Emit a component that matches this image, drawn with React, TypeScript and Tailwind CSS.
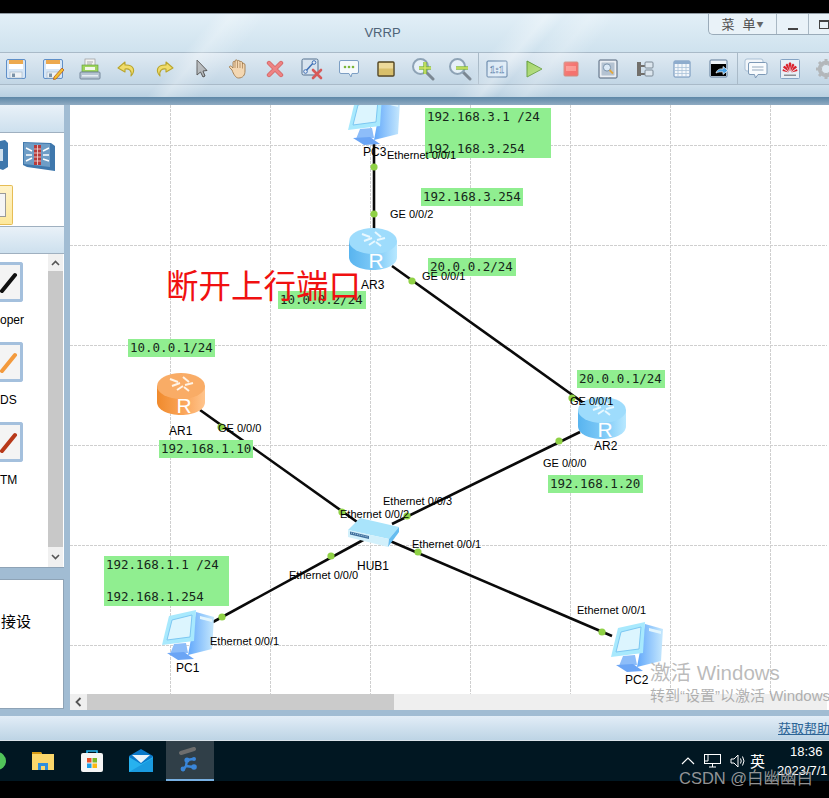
import type { ReactNode } from "react";

const CANVAS_X = 70;
const CANVAS_Y = 105;

const gridX = [170, 270, 370, 470, 570, 670, 770];
const gridY = [145, 245, 345, 445, 545, 645];

const links = [
  [374, 142, 374, 235],
  [392, 266, 585, 404],
  [200, 410, 360, 524],
  [580, 432, 392, 524],
  [365, 539, 213, 622],
  [390, 541, 612, 636],
];

const dots = [
  [374, 167], [374, 214], [412, 281], [572, 398], [221, 427], [342, 512],
  [559, 441], [407, 516], [331, 556], [222, 617], [418, 552], [602, 632],
];

const ports = [
  { text: "Ethernet 0/0/1", x: 387, y: 155 },
  { text: "GE 0/0/2", x: 390, y: 214 },
  { text: "GE 0/0/1", x: 422, y: 276 },
  { text: "GE 0/0/0", x: 218, y: 428 },
  { text: "GE 0/0/1", x: 570, y: 401 },
  { text: "GE 0/0/0", x: 543, y: 463 },
  { text: "Ethernet 0/0/3", x: 383, y: 501 },
  { text: "Ethernet 0/0/2", x: 340, y: 514 },
  { text: "Ethernet 0/0/1", x: 412, y: 544 },
  { text: "Ethernet 0/0/0", x: 289, y: 575 },
  { text: "Ethernet 0/0/1", x: 210, y: 641 },
  { text: "Ethernet 0/0/1", x: 577, y: 610 },
];

const names = [
  { text: "PC3", x: 363, y: 152 },
  { text: "AR3", x: 361, y: 285 },
  { text: "AR1", x: 169, y: 431 },
  { text: "AR2", x: 594, y: 446 },
  { text: "HUB1", x: 357, y: 566 },
  { text: "PC1", x: 176, y: 668 },
  { text: "PC2", x: 625, y: 680 },
];

const notes = [
  { lines: ["192.168.3.1 /24", "", "192.168.3.254"], x: 425, y: 108, w: 126 },
  { lines: ["192.168.3.254"], x: 421, y: 188, w: 102 },
  { lines: ["20.0.0.2/24"], x: 428, y: 258, w: 88 },
  { lines: ["10.0.0.2/24"], x: 278, y: 291, w: 88 },
  { lines: ["10.0.0.1/24"], x: 128, y: 339, w: 87 },
  { lines: ["192.168.1.10"], x: 159, y: 440, w: 94 },
  { lines: ["20.0.0.1/24"], x: 577, y: 370, w: 88 },
  { lines: ["192.168.1.20"], x: 548, y: 475, w: 95 },
  { lines: ["192.168.1.1 /24", "", "192.168.1.254"], x: 104, y: 556, w: 125 },
];

const Save = ({ pencil }: { pencil?: boolean }) => (
  <svg width="22" height="22" viewBox="0 0 22 22">
    <rect x="1.5" y="1.5" width="19" height="19" rx="1.5" fill="#d6e6f6" stroke="#5f8fc8" />
    <rect x="4" y="2" width="14" height="4" fill="#eda94e" />
    <rect x="4" y="6" width="14" height="5" fill="#fff" />
    <rect x="5" y="14" width="12" height="6" fill="#eef2f6" stroke="#9fb2c4" strokeWidth="0.6" />
    <rect x="7" y="15.5" width="3" height="3.5" fill="#7c93a8" />
    {pencil && <path d="M12 19 L20 10 L22 12 L14 21 L11.5 21.5 Z" fill="#f2c230" stroke="#b8561c" strokeWidth="0.8" />}
  </svg>
);

const Printer = () => (
  <svg width="22" height="22" viewBox="0 0 22 22">
    <rect x="6" y="1" width="10" height="9" fill="#f3f3f3" stroke="#9a9a9a" strokeWidth="0.7" />
    <path d="M8 4h6M8 6h5" stroke="#8a8a8a" strokeWidth="0.7" />
    <rect x="3" y="7" width="16" height="7" fill="#9ed45f" stroke="#5d9a2e" strokeWidth="0.6" />
    <rect x="6" y="9" width="10" height="3" fill="#f3f8ea" />
    <rect x="1" y="14" width="20" height="7" rx="1" fill="#b6c4d2" stroke="#75879a" />
    <rect x="3" y="17" width="16" height="1.5" fill="#e6edf3" />
  </svg>
);

const Turn = ({ flip }: { flip?: boolean }) => (
  <svg width="20" height="20" viewBox="0 0 20 20" className={flip ? "-scale-x-100" : ""}>
    <path d="M8 3 L1 9 L8 13 V10 C12 9.5 15 11 14 17 C18.5 12 17.5 5.5 8 6 Z" fill="#f0dc6a" stroke="#b9a52c" strokeWidth="1.1" strokeLinejoin="round" />
  </svg>
);

const Cursor = () => (
  <svg width="20" height="20" viewBox="0 0 20 20">
    <path d="M6 1 V16 L9.5 13 L12 18 L14 17 L12 12 L16 11.5 Z" fill="#a9adb0" stroke="#3d3d3d" strokeWidth="1" strokeLinejoin="round" />
  </svg>
);

const Hand = () => (
  <svg width="20" height="20" viewBox="0 0 20 20">
    <path d="M4 11 L1.5 8.5 C1 7 2.5 6.5 3.5 7.5 L5 9 V3.5 C5 2 7 2 7 3.5 V2 C7 .5 9.5 .5 9.5 2 V2.5 C9.5 1 12 1 12 3 C12 2 14.5 2.2 14.5 4 V5 C14.5 4 17 4 17 6 V12 C17 16 15 19 10.5 19 C7.5 19 5.5 15 4 11 Z" fill="#f3d7b2" stroke="#a07a4d" strokeWidth="0.9" />
    <path d="M7 4 V9 M9.5 3 V9 M12 3.5 V9 M14.5 5 V9.5" stroke="#a07a4d" strokeWidth="0.7" />
  </svg>
);

const Cross = () => (
  <svg width="18" height="18" viewBox="0 0 18 18">
    <path d="M3 3 L15 15 M15 3 L3 15" stroke="#d46a6b" strokeWidth="4.4" strokeLinecap="round" />
    <path d="M3 3 L15 15 M15 3 L3 15" stroke="#ee8384" strokeWidth="2.6" strokeLinecap="round" />
  </svg>
);

const DeleteLink = () => (
  <svg width="22" height="22" viewBox="0 0 22 22">
    <rect x="1" y="1" width="16" height="16" rx="1.5" fill="#d8e4ef" stroke="#55718f" />
    <path d="M4 14 L13 4" stroke="#3f70b6" strokeWidth="1.5" />
    <circle cx="4.5" cy="13.5" r="1.8" fill="#e7eef5" stroke="#3f70b6" />
    <circle cx="13" cy="4.5" r="1.8" fill="#e7eef5" stroke="#3f70b6" />
    <path d="M12 12 L20 20 M20 12 L12 20" stroke="#d65a5a" strokeWidth="2.6" strokeLinecap="round" />
  </svg>
);

const Comment = () => (
  <svg width="20" height="20" viewBox="0 0 20 20">
    <path d="M2 1.5 H18 Q19.5 1.5 19.5 3 V13 Q19.5 14.5 18 14.5 H13 L12 18 L10 14.5 H2 Q.5 14.5 .5 13 V3 Q.5 1.5 2 1.5 Z" fill="#f5f9fc" stroke="#7d9fc4" />
    <circle cx="6" cy="8" r="1.3" fill="#7cb63a" />
    <circle cx="10" cy="8" r="1.3" fill="#7cb63a" />
    <circle cx="14" cy="8" r="1.3" fill="#7cb63a" />
  </svg>
);

const Frame = () => (
  <svg width="18" height="16" viewBox="0 0 18 16">
    <rect x="1" y="1" width="16" height="14" rx="1" fill="#ecd99a" stroke="#51431f" strokeWidth="1.4" />
    <rect x="2" y="7.5" width="14" height="6.5" fill="#d8bf6b" />
  </svg>
);

const Zoom = ({ plus }: { plus?: boolean }) => (
  <svg width="24" height="24" viewBox="0 0 24 24">
    <path d="M15 15 L22 22" stroke="#7b8792" strokeWidth="3" strokeLinecap="round" />
    <circle cx="9.5" cy="9.5" r="7.5" fill="#e6f0f8" stroke="#8ea3b6" strokeWidth="2" />
    <path d="M8 11 H20" stroke="#7fb83a" strokeWidth="3.4" />
    {plus && <path d="M14 5 V17" stroke="#7fb83a" strokeWidth="3.4" />}
    <path d="M8 11 H20" stroke="#d7e86a" strokeWidth="1.4" />
    {plus && <path d="M14 5 V17" stroke="#d7e86a" strokeWidth="1.4" />}
  </svg>
);

const OneToOne = () => (
  <svg width="22" height="18" viewBox="0 0 22 18">
    <rect x="1" y="1" width="20" height="16" rx="1" fill="#d6e6f4" stroke="#466d96" />
    <text x="11" y="13" textAnchor="middle" fontSize="11" fontWeight="700" fontFamily="Liberation Serif" fill="#f5f9fc" stroke="#2f6398" strokeWidth="0.6">1:1</text>
  </svg>
);

const Play = () => (
  <svg width="18" height="18" viewBox="0 0 18 18">
    <path d="M2 1 L17 9 L2 17 Z" fill="#a5d66a" stroke="#5f9a36" strokeLinejoin="round" />
  </svg>
);

const Stop = () => (
  <svg width="16" height="16" viewBox="0 0 16 16">
    <rect x="1" y="1" width="14" height="14" rx="1" fill="#f4736f" stroke="#cf8d80" />
    <rect x="3" y="5" width="10" height="5" fill="#fb9a94" />
  </svg>
);

const Capture = () => (
  <svg width="20" height="20" viewBox="0 0 20 20">
    <rect x="1" y="1" width="18" height="18" rx="1" fill="#e1e7ee" stroke="#53647a" />
    <rect x="3" y="3" width="14" height="14" fill="#b5c3d2" stroke="#fff" strokeWidth="0.7" />
    <circle cx="9" cy="8.5" r="3.6" fill="#dbe9f6" stroke="#7d95ad" />
    <path d="M11.5 11 L15 14.5" stroke="#e3a93d" strokeWidth="1.8" />
  </svg>
);

const Tree = () => (
  <svg width="18" height="18" viewBox="0 0 18 18">
    <rect x="1" y="2" width="4" height="14" fill="#72706c" />
    <path d="M4 6 H9 M4 14 H9" stroke="#72706c" strokeWidth="2" />
    <rect x="9" y="2" width="8" height="6" rx="1" fill="#dce6ee" stroke="#7d8a96" />
    <rect x="9" y="10" width="8" height="6" rx="1" fill="#dce6ee" stroke="#7d8a96" />
  </svg>
);

const Table = () => (
  <svg width="18" height="18" viewBox="0 0 18 18">
    <rect x="1" y="1" width="16" height="16" rx="1" fill="#f3f7fb" stroke="#6d8fb8" />
    <rect x="1" y="1" width="16" height="3" fill="#8eaccd" />
    <path d="M1 7.5 H17 M1 10.5 H17 M1 13.5 H17 M5 4 V17 M9 4 V17 M13 4 V17" stroke="#a9c1d9" strokeWidth="0.8" />
  </svg>
);

const Terminal = () => (
  <svg width="20" height="20" viewBox="0 0 20 20">
    <rect x="1" y="1" width="17" height="17" rx="1" fill="#eef3f8" stroke="#5f7b99" />
    <rect x="2" y="5" width="15" height="12" fill="#000" />
    <path d="M7 14 C8 10.5 11 9.5 14 10 V7.5 L19 11.5 L14 15.5 V13 C11.5 12.5 9 13 7 14 Z" fill="#4aa2e5" stroke="#fff" strokeWidth="0.7" />
  </svg>
);

const Chat = () => (
  <svg width="24" height="22" viewBox="0 0 24 22">
    <rect x="1" y="1" width="18" height="12" rx="2" fill="#f2f6fa" stroke="#a9bfd4" />
    <path d="M6 4.5 H21.5 Q23 4.5 23 6 V15 Q23 16.5 21.5 16.5 H14 L11.5 20 L10.5 16.5 H6 Q4.5 16.5 4.5 15 V6 Q4.5 4.5 6 4.5 Z" fill="#f8fbfd" stroke="#7d99b6" />
    <path d="M8 9 H19.5 M8 12 H19.5" stroke="#94a9be" />
  </svg>
);

const Huawei = () => (
  <svg width="20" height="20" viewBox="0 0 20 20" className="-translate-x-[3px]">
    <rect x=".5" y=".5" width="19" height="19" rx="1" fill="#e8eff6" stroke="#86a4c4" />
    <g fill="#d9212c">
      <path d="M10 12 L8.6 4.5 L10 3 L11.4 4.5 Z" />
      <path d="M9.5 12.5 L5.5 6 L7 4.5 L8.5 6 Z" />
      <path d="M10.5 12.5 L14.5 6 L13 4.5 L11.5 6 Z" />
      <path d="M9 13 L3 8.5 L4.2 6.8 L6.5 8 Z" />
      <path d="M11 13 L17 8.5 L15.8 6.8 L13.5 8 Z" />
      <path d="M8.8 13.5 L2.5 12 L3 10 Z" />
      <path d="M11.2 13.5 L17.5 12 L17 10 Z" />
    </g>
    <rect x="4" y="15.5" width="12" height="1.5" fill="#8b8f94" />
  </svg>
);

const Gear = () => (
  <svg width="22" height="22" viewBox="0 0 22 22" className="-translate-x-[4px]">
    <circle cx="11" cy="11" r="6.5" fill="none" stroke="#b3b7ba" strokeWidth="3.4" />
    <path d="M11 1 V21 M1 11 H21 M4 4 L18 18 M18 4 L4 18" stroke="#b3b7ba" strokeWidth="3" />
    <circle cx="11" cy="11" r="4" fill="#dce8f0" />
  </svg>
);

const tools: ReactNode[] = [
  <Save />, <Save pencil />, <Printer />, <Turn />, <Turn flip />, <Cursor />, <Hand />, <Cross />,
  <DeleteLink />, <Comment />, <Frame />, <Zoom plus />, <Zoom />, <OneToOne />, <Play />, <Stop />,
  <Capture />, <Tree />, <Table />, <Terminal />, <Chat />, <Huawei />, <Gear />,
];

const Router = ({ x, y, orange }: { x: number; y: number; orange?: boolean }) => {
  const id = orange ? "router-orange" : "router-blue";
  return (
    <svg
      className="absolute overflow-visible"
      style={{ left: x - CANVAS_X, top: y - CANVAS_Y }}
      width="48"
      height="42"
      viewBox="0 0 48 42"
    >
      <defs>
        <linearGradient id={id} x1="0" x2="1" y1="0" y2="0">
          <stop offset="0" stopColor={orange ? "#f08a2c" : "#58b4ef"} />
          <stop offset="0.6" stopColor={orange ? "#fba85e" : "#84cdf8"} />
          <stop offset="1" stopColor={orange ? "#ffc48c" : "#b8e8ff"} />
        </linearGradient>
      </defs>
      <path d="M0 13 V29 C0 37 11 42 24 42 C37 42 48 37 48 29 V13 Z" fill={`url(#${id})`} />
      <ellipse cx="24" cy="13" rx="24" ry="13" fill={orange ? "#f9ac66" : "#9edcfc"} />
      <g stroke={orange ? "#fff3e6" : "#e8f8ff"} strokeWidth="2" fill="none">
        <path d="M13 6 L21 9 M15 13 L23 10 M26 4 L32 9 M28 12 L36 10 M20 17 L26 13 M32 18 L27 14" />
      </g>
      <text x="27" y="40" textAnchor="middle" fontSize="21" fontFamily="Liberation Sans" fill="#fff">
        R
      </text>
    </svg>
  );
};

const Pc = ({ x, y }: { x: number; y: number }) => (
  <svg
    className="absolute"
    style={{ left: x - CANVAS_X, top: y - CANVAS_Y }}
    width="52"
    height="52"
    viewBox="0 0 52 52"
  >
    <defs>
      <linearGradient id="pc-tower" x1="0" x2="1" y1="0" y2="0">
        <stop offset="0" stopColor="#62a8fb" />
        <stop offset="1" stopColor="#c6e8fd" />
      </linearGradient>
    </defs>
    <path d="M34 3 L52 8 L50 40 L26 46 Z" fill="url(#pc-tower)" />
    <path d="M38 7 L50 10 L50 13 L38 10 Z" fill="#e2f5fd" />
    <path d="M7 7 L34 1 L32 32 L0 36 Z" fill="#a8e9fd" />
    <path d="M10 11 L30 6 L28 28 L5 31 Z" fill="#dcf5fe" stroke="#7cc7f2" />
    <path d="M12 35 L24 34 L26 44 L8 45 Z" fill="#8dbdf9" />
    <path d="M5 44 L22 43 L32 50 L16 51 Z" fill="#6ba5f5" />
  </svg>
);

const Hub = ({ x, y }: { x: number; y: number }) => (
  <svg
    className="absolute"
    style={{ left: x - CANVAS_X, top: y - CANVAS_Y }}
    width="52"
    height="30"
    viewBox="0 0 52 30"
  >
    <path d="M0 12 L12 0 L51 9 L41 21 Z" fill="#a9e4fb" />
    <path d="M0 12 L41 21 L40 29 L0 19 Z" fill="#d2f0fb" />
    <path d="M41 21 L51 9 L51 14 L40 29 Z" fill="#65bdf0" />
    <path d="M2 13.5 L21 18 L21 21 L2 16.5 Z" fill="#3f6f9c" />
    <path d="M3 15 L20 19" stroke="#cfe6f5" strokeDasharray="1 1" strokeWidth="0.8" />
  </svg>
);

const PartialTile = ({ top, color, label, textTop }: { top: string; color: string; label: string; textTop: string }) => (
  <div className={`absolute left-0 ${top}`}>
    <div className="relative h-10 w-[23px] rounded-r-[3px] border-[3px] border-l-0 border-[#a4c0dd] bg-[#f4f4f4]">
      <svg width="20" height="34" viewBox="0 0 20 34">
        <path d="M2 26 L15 10" stroke={color} strokeWidth="4" strokeLinecap="round" />
      </svg>
    </div>
    <span className={`absolute left-0 ${textTop} text-xs`}>{label}</span>
  </div>
);

const App = () => {
  return (
    <div className="relative flex h-[798px] w-[829px] flex-col overflow-hidden bg-black font-['Liberation_Sans',sans-serif] text-black">
      <div className="h-[13px] bg-black" />

      <div className="relative flex h-[39px] items-center justify-center border-t border-[#8f9aa3] bg-[linear-gradient(180deg,#e2eff7_0%,#cfe2ee_100%)]">
        <span className="ml-[-64px] text-[13px] text-[#4e6378]">VRRP</span>
        <div className="absolute left-[708px] top-0 z-10 flex h-[21px] w-[121px] rounded-bl-[5px] border-b border-l border-[#9aabb9] bg-[#e9f2f8]">
          <span className="flex w-[68px] items-center justify-center border-r border-[#a9b8c4] font-['Noto_Sans_CJK_SC',sans-serif] text-[13px] text-[#4d4d4d]">
            菜<span className="ml-2">单</span>
            <span className="ml-px text-[7px] text-[#666]">▼</span>
          </span>
          <span className="flex w-[32px] items-end justify-center border-r border-[#a9b8c4] pb-[4px]">
            <span className="h-[2px] w-[10px] bg-[#444]" />
          </span>
          <span className="flex items-center pl-[10px]">
            <span className="h-[9px] w-[10px] border border-t-2 border-[#444]" />
          </span>
        </div>
      </div>

      <div className="flex h-[33px] items-center border-y border-[#a9bac8] bg-[linear-gradient(180deg,#dfeaf3_0%,#c2d6e5_100%)]">
        <div className="ml-[-3px] flex">
          {tools.map((tool, i) => (
            <div
              key={i}
              className={`flex h-[31px] w-[37px] shrink-0 items-center justify-center ${i === 13 || i === 20 ? "border-l border-[#a9bac8]" : ""}`}
            >
              {tool}
            </div>
          ))}
        </div>
      </div>

      <div className="h-[12px] bg-[linear-gradient(180deg,#cfe0ec_0%,#b9d0e1_100%)]" />
      <div className="h-[8px] bg-[linear-gradient(180deg,#5d87a6_0%,#8fabc2_100%)]" />

      <div className="pointer-events-none absolute left-0 top-[14px] h-[83px] w-[829px] bg-[linear-gradient(130deg,transparent_24%,rgba(255,255,255,0.28)_26%,transparent_30%,transparent_58%,rgba(255,255,255,0.3)_61%,transparent_63%,rgba(255,255,255,0.22)_66%,transparent_69%)]" />

      <div className="flex h-[611px] bg-[#a1bcd3]">
        <aside className="flex w-[64px] shrink-0 flex-col">
          <div className="h-[28px] border-b border-[#9fb0c0] bg-[linear-gradient(180deg,#e9f1f8_0%,#cde0ee_100%)]" />
          <div className="relative h-[93px] bg-white">
            <svg className="absolute left-0 top-[6px]" width="9" height="32" viewBox="0 0 9 32">
              <path d="M0 2 L5 1 L8 4 V28 L3 31 L0 30 Z" fill="#3f78ad" />
              <rect x="0" y="10" width="3" height="12" fill="#cfe0ee" />
            </svg>
            <svg className="absolute left-[23px] top-[6px]" width="32" height="32" viewBox="0 0 32 32">
              <path d="M0 3 L28 4 L32 7 V32 L4 28 L0 26 Z" fill="#3f78ad" />
              <path d="M1 4 L27 5 V28 L1 25 Z" fill="#6e9dc6" />
              <rect x="11" y="6" width="7" height="20" fill="#b83b3b" />
              <path d="M11 10 H18 M11 14 H18 M11 18 H18 M11 22 H18 M14.5 6 V26" stroke="#f0dada" strokeWidth="0.8" />
              <path d="M3 9 L9 12 M3 16 H9 M3 22 L9 19 M20 12 L26 9 M20 16 H26 M20 20 L26 22" stroke="#fff" strokeWidth="1.4" />
            </svg>
            <div className="absolute left-0 top-[52px] flex h-[40px] w-[13px] items-center rounded-r-[2px] border border-l-0 border-[#e6bd55] bg-[linear-gradient(180deg,#fff3c9_0%,#fde89c_100%)]">
              <div className="h-[24px] w-[6px] border border-l-0 border-[#9a9a9a] bg-[#f5f5f5]" />
            </div>
          </div>
          <div className="h-[28px] border-y border-[#9fb0c0] bg-[linear-gradient(180deg,#e9f1f8_0%,#cde0ee_100%)]" />
          <div className="relative flex h-[314px] justify-end border-b border-[#8ea3b6] bg-white">
            <PartialTile top="top-[8px]" color="#111" label="oper" textTop="top-[50px]" />
            <PartialTile top="top-[88px]" color="#f39a3d" label="DS" textTop="top-[50px]" />
            <PartialTile top="top-[168px]" color="#b8391a" label="TM" textTop="top-[50px]" />
            <div className="mr-px flex w-[15px] flex-col bg-[#c8c8c8]">
              <div className="flex h-[17px] items-center justify-center bg-[#f0f0f0]">
                <svg width="9" height="6" viewBox="0 0 9 6">
                  <path d="M1 5 L4.5 1.5 L8 5" fill="none" stroke="#555" strokeWidth="1.6" />
                </svg>
              </div>
              <div className="flex-1" />
              <div className="flex h-[20px] items-center justify-center bg-[#f0f0f0]">
                <svg width="9" height="6" viewBox="0 0 9 6">
                  <path d="M1 1 L4.5 4.5 L8 1" fill="none" stroke="#555" strokeWidth="1.6" />
                </svg>
              </div>
            </div>
          </div>
          <div className="h-[11px]" />
          <div className="flex h-[130px] items-start border-y border-r border-[#8ea3b6] bg-white pl-[1px] pt-[31px] font-['Noto_Sans_CJK_SC',sans-serif] text-[15px] leading-5">
            接设
          </div>
        </aside>

        <div className="ml-[6px] flex h-[605px] flex-1 flex-col border-r-2 border-white">
          <div className="relative flex-1 overflow-hidden bg-white">
            <svg className="absolute left-0 top-0" width="757" height="589" viewBox="70 105 757 589">
              {gridX.map((x) => (
                <line key={x} x1={x + 0.5} x2={x + 0.5} y1="105" y2="694" stroke="#cfcfcf" strokeDasharray="3 1" />
              ))}
              {gridY.map((y) => (
                <line key={y} x1="70" x2="827" y1={y + 0.5} y2={y + 0.5} stroke="#cfcfcf" strokeDasharray="3 1" />
              ))}
              {links.map(([x1, y1, x2, y2], i) => (
                <line key={i} x1={x1} y1={y1} x2={x2} y2={y2} stroke="#0a0a0a" strokeWidth="2.6" />
              ))}
              {dots.map(([cx, cy], i) => (
                <circle key={i} cx={cx} cy={cy} r="3.6" fill="#8fd145" />
              ))}
            </svg>

            <Pc x={348} y={94} />
            <Router x={349} y={228} />
            <Router x={157} y={373} orange />
            <Router x={578} y={397} />
            <Hub x={348} y={518} />
            <Pc x={162} y={609} />
            <Pc x={611} y={621} />

            {notes.map((n) => (
              <div
                key={`${n.x}-${n.y}`}
                className="absolute bg-[#90ee90] px-[2px] py-px font-['DejaVu_Sans_Mono',monospace] text-[12.5px] leading-4 whitespace-pre text-[#16261a]"
                style={{ left: n.x - CANVAS_X, top: n.y - CANVAS_Y, width: n.w }}
              >
                {n.lines.map((line, i) => (
                  <div key={i} className="h-4">
                    {line}
                  </div>
                ))}
              </div>
            ))}

            {names.map((n) => (
              <span
                key={n.text}
                className="absolute -translate-y-1/2 text-xs whitespace-nowrap"
                style={{ left: n.x - CANVAS_X, top: n.y - CANVAS_Y }}
              >
                {n.text}
              </span>
            ))}

            {ports.map((p) => (
              <span
                key={`${p.x}-${p.y}`}
                className="absolute -translate-y-1/2 text-[11px] whitespace-nowrap"
                style={{ left: p.x - CANVAS_X, top: p.y - CANVAS_Y }}
              >
                {p.text}
              </span>
            ))}

            <span className="absolute left-[96px] top-[155px] font-['Noto_Sans_CJK_SC',sans-serif] text-[32.5px] leading-[48px] whitespace-nowrap text-[#f01010]">
              断开上行端口
            </span>
          </div>

          <div className="flex h-[16px] shrink-0 bg-[#efefef]">
            <div className="flex w-[17px] items-center justify-center">
              <svg width="7" height="10" viewBox="0 0 7 10">
                <path d="M5.5 1 L1.5 5 L5.5 9" fill="none" stroke="#555" strokeWidth="1.8" />
              </svg>
            </div>
            <div className="w-[307px] bg-[#cbcbcb]" />
          </div>
        </div>
      </div>

      <div className="flex h-[25px] items-center justify-end border-b border-[#d9e3ea] bg-[linear-gradient(180deg,#e2edf7_0%,#bdd4e5_100%)]">
        <span className="w-[51px] overflow-hidden font-['Noto_Sans_CJK_SC',sans-serif] text-[13px] whitespace-nowrap text-[#2c6496] underline">
          获取帮助
        </span>
      </div>

      <div className="relative flex h-[40px] items-center bg-[#011722]">
        <div className="flex h-full w-[214px] items-center">
          <div className="-ml-[12px] h-[18px] w-[18px] rounded-full bg-[#52c45a]" />
          <svg className="ml-[26px]" width="22" height="20" viewBox="0 0 22 20">
            <path d="M0 1 H9 L10 3 H22 V19 H0 Z" fill="#fbd76b" />
            <path d="M0 1 H9 L10 3 H0 Z" fill="#d69a14" />
            <path d="M6 12 H16 V19 H13 V15 H9 V19 H6 Z" fill="#2f8fdc" />
          </svg>
          <svg className="ml-[26px]" width="24" height="24" viewBox="0 0 24 24">
            <path d="M7 5 V2 H17 V5" fill="none" stroke="#29b6f0" strokeWidth="1.6" />
            <rect x="1" y="4" width="22" height="19" rx="2" fill="#f5f5f5" />
            <rect x="7" y="9" width="4.5" height="4.5" fill="#e8502a" />
            <rect x="12.5" y="9" width="4.5" height="4.5" fill="#7bb928" />
            <rect x="7" y="14.5" width="4.5" height="4.5" fill="#1a9fe8" />
            <rect x="12.5" y="14.5" width="4.5" height="4.5" fill="#fdb813" />
          </svg>
          <svg className="ml-[25px]" width="24" height="24" viewBox="0 0 24 24">
            <path d="M12 0 L24 7 V23 H0 V7 Z" fill="#0b78c9" />
            <path d="M3 6 H21 L12 14 Z" fill="#eaf3fa" />
            <path d="M0 8 L12 15 L24 8 V23 H0 Z" fill="#27b2ef" />
            <path d="M0 23 L24 9 V23 Z" fill="#1a9be0" />
          </svg>
          <div className="ml-[13px] flex h-full w-[48px] shrink-0 flex-col">
            <div className="flex flex-1 items-center justify-center bg-[#303f48] pr-[3px]">
              <svg width="22" height="26" viewBox="0 0 22 26">
                <path d="M3 6 L16 2" stroke="#6d6d6d" strokeWidth="4" strokeLinecap="round" />
                <path d="M9 13 L15 12 M9 13 L8 19 M8 19 L15 20 M8 19 L5 23" stroke="#3a86d8" strokeWidth="2.4" strokeLinecap="round" />
                <circle cx="9" cy="13" r="2.6" fill="#3a86d8" />
                <circle cx="16" cy="12" r="2" fill="#3a86d8" />
                <circle cx="16" cy="20" r="2.8" fill="#3a86d8" />
                <circle cx="5" cy="22" r="2.4" fill="#3a86d8" />
              </svg>
            </div>
            <div className="h-[2px] bg-[#78b0e2]" />
          </div>
        </div>
        <div className="absolute left-[681px] top-[10px] flex items-center text-white">
          <svg width="14" height="10" viewBox="0 0 14 10">
            <path d="M1 8 L7 2 L13 8" fill="none" stroke="#fff" strokeWidth="1.2" />
          </svg>
          <svg className="ml-[9px]" width="17" height="14" viewBox="0 0 17 14">
            <rect x="0.5" y="0.5" width="16" height="9" fill="#011722" stroke="#fff" />
            <path d="M0.5 0.5 H4 V7 H0.5 M8.5 10 V13 M5 13 H12" fill="none" stroke="#fff" />
          </svg>
          <svg className="ml-[9px]" width="16" height="14" viewBox="0 0 16 14">
            <path d="M1 5 H4 L8 1 V13 L4 9 H1 Z M10.5 4.5 Q12 7 10.5 9.5 M12.5 2.5 Q15.5 7 12.5 11.5" fill="none" stroke="#fff" />
          </svg>
          <span className="ml-[4px] font-['Noto_Sans_CJK_SC',sans-serif] text-[15px] leading-5">英</span>
        </div>
        <span className="absolute left-[790px] top-[3px] text-[13px] leading-4 text-white">18:36</span>
        <span className="absolute left-[777px] top-[22px] text-[13px] leading-4 whitespace-nowrap text-white">2023/7/1</span>
      </div>

      <div className="h-[17px] bg-black" />

      <span className="absolute left-[650px] top-[659px] font-['Liberation_Sans','Noto_Sans_CJK_SC',sans-serif] text-[20.5px] leading-7 whitespace-nowrap text-[#9d9d9d]/70">
        激活 Windows
      </span>
      <span className="absolute left-[650px] top-[686px] font-['Liberation_Sans','Noto_Sans_CJK_SC',sans-serif] text-[15px] leading-5 whitespace-nowrap text-[#9d9d9d]/80">
        转到“设置”以激活 Windows
      </span>
      <span className="absolute left-[679px] top-[768px] font-['Liberation_Sans','Noto_Sans_CJK_SC',sans-serif] text-[16.5px] leading-5 whitespace-nowrap text-[#a6a6a6]/90">
        CSDN @白幽幽白
      </span>
    </div>
  );
};

export default App;
